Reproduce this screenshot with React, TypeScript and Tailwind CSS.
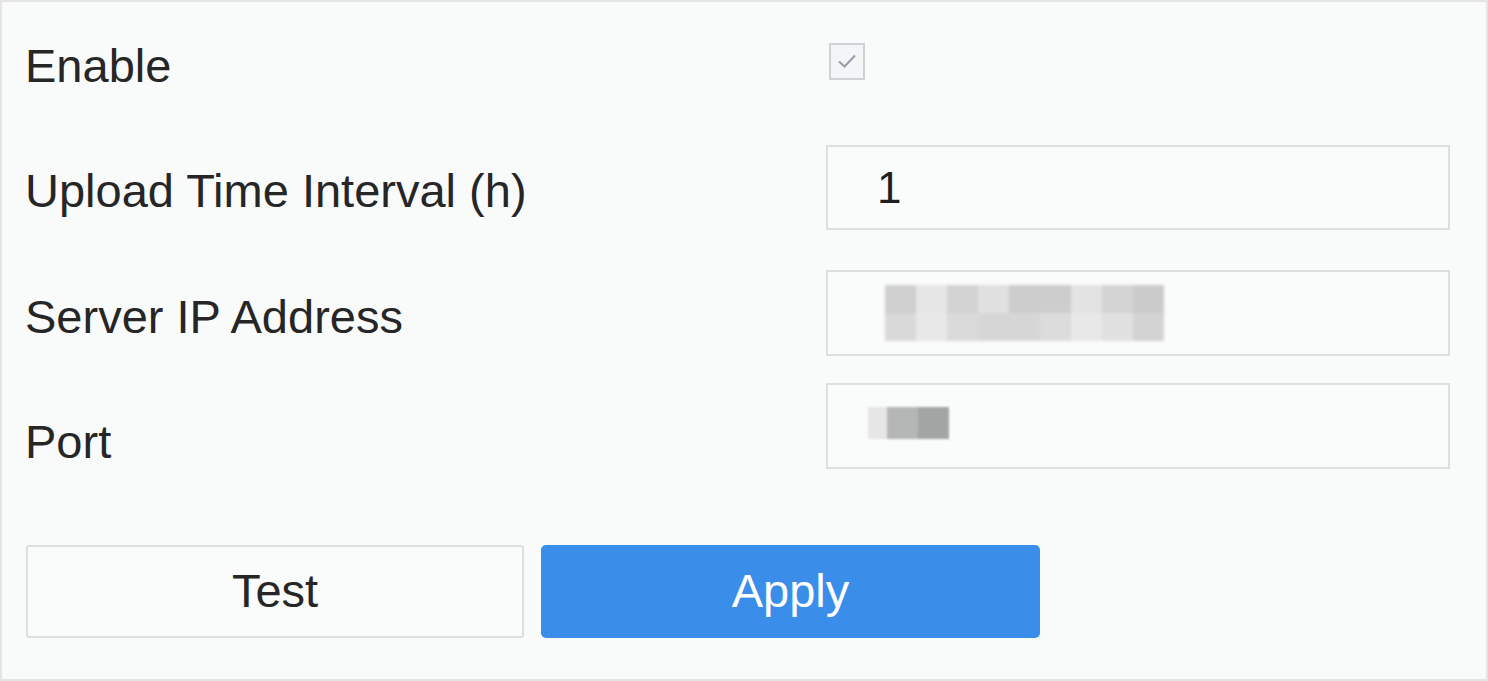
import React from "react";

const font = { fontFamily: '"Liberation Sans", Arial, sans-serif' };

const ipRows = [
  ["#cfcfcf", "#e6e6e6", "#d2d2d2", "#e0e0e0", "#cdcdcd", "#cdcdcd", "#e3e3e3", "#d4d4d4", "#cbcbcb"],
  ["#d9d9d9", "#e8e8e8", "#dadada", "#d6d6d6", "#d6d6d6", "#dcdcdc", "#e8e8e8", "#e0e0e0", "#d3d3d3"],
];

const Label = ({ text, className = "" }: { text: string; className?: string }) => (
  <div className={`w-[801px] shrink-0 text-[47px] leading-none text-[#262626] ${className}`}>{text}</div>
);

const Box = ({ children }: { children?: React.ReactNode }) => (
  <div className="flex h-full w-[624px] items-center border-2 border-[#dcdfe0] bg-[#fafbfb]">{children}</div>
);

export default function App() {
  return (
    <div
      style={font}
      className="flex h-[681px] w-[1488px] flex-col border-2 border-[#e4e4e4] bg-[#f9fafa] pl-[23px]"
    >
      {/* Enable */}
      <div className="flex h-[124px] items-center">
        <Label text="Enable" className="pt-[2px]" />
        <div className="mb-[6px] ml-[3px] flex h-[37px] w-[36px] items-center justify-center border-2 border-[#cfd2d4] bg-[#f4f5f7]">
          <svg width="22" height="18" viewBox="0 0 22 18" fill="none">
            <path d="M3 9.5 L8.5 14.5 L19 3.5" stroke="#9a9ca8" strokeWidth="2" />
          </svg>
        </div>
      </div>

      {/* Upload Time Interval */}
      <div className="mt-[19px] flex h-[85px] items-center">
        <Label text="Upload Time Interval (h)" className="pt-[6px]" />
        <Box>
          <span className="pl-[49px] text-[44px] leading-none text-[#1f1f1f]">1</span>
        </Box>
      </div>

      {/* Server IP */}
      <div className="mt-[40px] flex h-[86px] items-center">
        <Label text="Server IP Address" className="pt-[6px]" />
        <Box>
          <div className="ml-[57px] flex flex-col blur-[1.5px]">
            {ipRows.map((row, r) => (
              <div key={r} className="flex">
                {row.map((c, i) => (
                  <div key={i} className="h-[28px] w-[31px]" style={{ backgroundColor: c }} />
                ))}
              </div>
            ))}
          </div>
        </Box>
      </div>

      {/* Port */}
      <div className="mt-[27px] flex h-[86px] items-center">
        <Label text="Port" className="pt-[30px]" />
        <Box>
          <div className="mb-[6px] ml-[40px] flex blur-[1px]">
            <div className="h-[32px] w-[19px] bg-[#e6e6e6]" />
            <div className="h-[32px] w-[31px] bg-[#b5b6b6]" />
            <div className="h-[32px] w-[31px] bg-[#a3a4a4]" />
          </div>
        </Box>
      </div>

      {/* Buttons */}
      <div className="mt-[76px] flex gap-[17px] pl-[1px]">
        <button className="h-[93px] w-[498px] rounded-[3px] border-2 border-[#dcdfe0] bg-[#fafbfb] text-[47px] text-[#262626]">
          Test
        </button>
        <button className="h-[93px] w-[499px] rounded-[5px] bg-[#3a8eea] text-[47px] text-white">
          Apply
        </button>
      </div>
    </div>
  );
}
